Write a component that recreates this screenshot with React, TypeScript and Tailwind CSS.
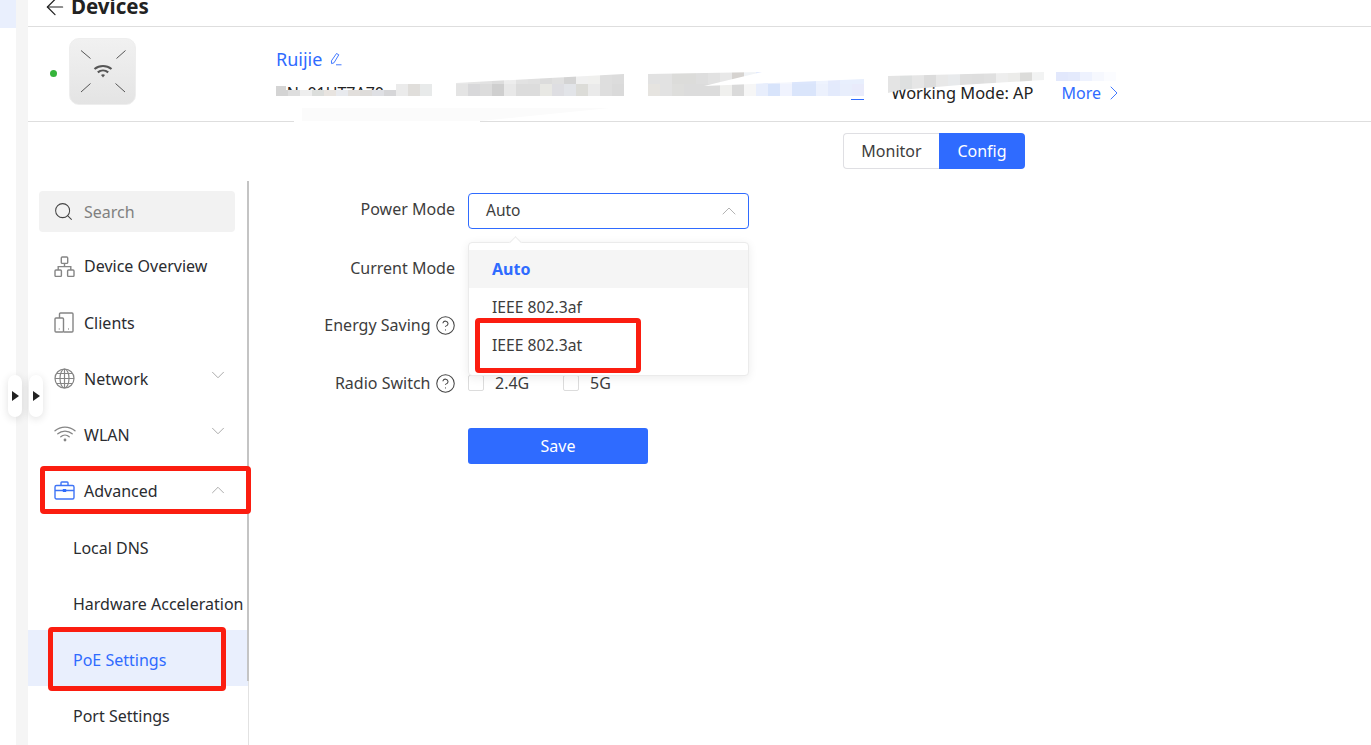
import React from "react";
import { ArrowLeft, ChevronDown, ChevronRight, ChevronUp, CircleHelp, Search } from "lucide-react";

const textFont = "font-['Noto_Sans','Open_Sans',sans-serif]";

function Mosaic({ rows, className }: { rows: string[][]; className: string }) {
  return (
    <div className={`absolute flex flex-col ${className}`}>
      {rows.map((cells, r) => (
        <div key={r} className="flex flex-1">
          {cells.map((c, i) => (
            <div key={i} className="h-full w-[12px] shrink-0" style={{ backgroundColor: c }} />
          ))}
        </div>
      ))}
    </div>
  );
}

function TopologyIcon() {
  return (
    <svg width="21" height="21" viewBox="0 0 21 21" fill="none" stroke="#858585" strokeWidth="1.4">
      <rect x="7.300" y="1" width="6.400" height="6.400" rx="1" />
      <rect x="1" y="14" width="6.400" height="6.400" rx="1" />
      <rect x="13.600" y="14" width="6.400" height="6.400" rx="1" />
      <path d="M10.500 7.400v3.200M4.200 14v-3.400h12.600v3.400" />
    </svg>
  );
}

function ClientsIcon() {
  return (
    <svg width="20" height="21" viewBox="0 0 20 21" fill="none" stroke="#858585" strokeWidth="1.4">
      <path d="M5.500 6V2a1 1 0 0 1 1-1H18a1 1 0 0 1 1 1v17a1 1 0 0 1-1 1H9.500" />
      <rect x="1" y="6" width="8.500" height="14" rx="1" />
      <path d="M4.800 17h.8M14 17h.8" strokeWidth="1.700" />
    </svg>
  );
}

function GlobeIcon() {
  return (
    <svg width="21" height="21" viewBox="0 0 21 21" fill="none" stroke="#858585" strokeWidth="1.200">
      <circle cx="10.500" cy="10.500" r="9.500" />
      <ellipse cx="10.500" cy="10.500" rx="4.500" ry="9.500" />
      <path d="M10.500 1v19M1 10.500h19M2.500 5.500h16M2.500 15.500h16" />
    </svg>
  );
}

function WifiIcon() {
  return (
    <svg width="22" height="18" viewBox="0 0 22 18" fill="none" stroke="#858585" strokeWidth="1.300" strokeLinecap="round">
      <path d="M1 5.800c5.600-5 14.400-5 20 0" />
      <path d="M3.800 8.800c4-3.600 10.400-3.600 14.400 0" />
      <path d="M6.800 11.700c2.400-2.100 6-2.100 8.400 0" />
      <circle cx="11" cy="15" r="1.400" fill="#858585" stroke="none" />
    </svg>
  );
}

function CaseIcon() {
  return (
    <svg width="21" height="19" viewBox="0 0 21 19" fill="none" stroke="#3f74f6" strokeWidth="1.400">
      <rect x="1" y="4.500" width="19" height="13.500" rx="1.500" />
      <path d="M7 4.500V1.800a.8.8 0 0 1 .8-.8h5.400a.8.8 0 0 1 .8.8v2.700M1 9.500h19" />
      <rect x="8.800" y="8" width="3.400" height="3" fill="#2f6bff" stroke="none" />
    </svg>
  );
}

function DeviceGlyph() {
  return (
    <svg width="46" height="46" viewBox="0 0 46 46" fill="none" stroke="#555" strokeWidth="1">
      <path d="M1 1.500l9.500 8M45.500 1.500l-9 8M1 43l9.500-8.500M45 43l-9.500-8.500" />
      <path d="M14.500 20c5-4 12-4 17 0" strokeWidth="2.200" />
      <path d="M17.800 23.300c3-2.400 7.400-2.400 10.400 0" strokeWidth="2.200" />
      <path d="M21 26l2 2.400 2-2.400c-1.200-.9-2.800-.9-4 0z" fill="#555" stroke="none" />
    </svg>
  );
}

function NavRow({ icon, label, chevron, flat }: { icon: React.ReactNode; label: string; chevron?: "up" | "down"; flat?: boolean }) {
  return (
    <div className="flex h-[56px] items-center pl-[26px] pr-[19px]">
      <div className="flex w-[30px] shrink-0 items-center">{icon}</div>
      <span className={`flex-1 text-[16px] text-[#2a2c30] ${flat ? "" : "pt-[2px]"}`}>{label}</span>
      {chevron === "down" && <ChevronDown size={22} strokeWidth={0.9} color="#9a9a9a" className="-translate-y-[3px]" />}
      {chevron === "up" && <ChevronUp size={22} strokeWidth={0.9} color="#9a9a9a" />}
    </div>
  );
}

function SubRow({ label, active }: { label: string; active?: boolean }) {
  return (
    <div className={`flex h-[56px] items-center pl-[45px] pt-[4px] text-[16px] whitespace-nowrap ${active ? "bg-[#e9effd] text-[#2f6bff]" : "text-[#2a2c30]"}`}>
      {label}
    </div>
  );
}

function Handle() {
  return (
    <div className="flex h-[42px] w-[14px] items-center justify-center rounded-[7px] bg-white shadow-[0_2px_8px_rgba(0,0,0,0.12)]">
      <div className="h-0 w-0 border-y-[5px] border-l-[7px] border-y-transparent border-l-[#222]" />
    </div>
  );
}

function FieldLabel({ children, className = "" }: { children: React.ReactNode; className?: string }) {
  return <div className={`flex w-[206px] shrink-0 items-center justify-end text-[16px] text-[#3d3d3d] ${className}`}>{children}</div>;
}

function Help() {
  return <CircleHelp size={21} strokeWidth={1.200} color="#444" className="ml-[4px] -mr-[0.5px]" />;
}

export default function App() {
  return (
    <div className={`relative flex h-[745px] w-[1371px] overflow-hidden bg-white ${textFont}`}>
      <div className="w-[16px] shrink-0">
        <div className="h-[28px] bg-[#e9effd]" />
      </div>
      <div className="w-[12px] shrink-0 bg-[#f5f5f5]" />

      <main className="flex min-w-0 flex-1 flex-col">
        <header className="flex h-[27px] shrink-0 items-end overflow-hidden border-b border-[#dedede] pb-[8px] pl-[14px]">
          <ArrowLeft size={26} strokeWidth={1.150} color="#222" className="-mb-[2px]" />
          <h1 className="ml-[3px] text-[20.500px] leading-[24px] font-bold text-[#222]">Devices</h1>
        </header>

        <section className="relative flex h-[95px] shrink-0 border-b border-[#dedede]">
          <div className="mt-[43px] ml-[22px] h-[7px] w-[7px] rounded-full bg-[#35b43a]" />
          <div className="mt-[11px] ml-[12px] flex h-[67px] w-[67px] items-center justify-center rounded-[10px] border border-[#eeeeee] bg-gradient-to-b from-[#f1f1f1] to-[#e4e4e4]">
            <DeviceGlyph />
          </div>
          <div className="ml-[140px] flex flex-col pt-[19px]">
            <div className="flex items-center gap-[7px]">
              <span className="text-[18px] leading-[26px] text-[#2f6bff]">Ruijie</span>
              <svg width="13" height="14" viewBox="0 0 13 14" fill="none" stroke="#2f6bff" strokeWidth="0.900">
                <path d="M7.500 1.500l2.300 1.300-4.800 8-2.400.8-.2-2.700zM7 12.800h5.500" />
              </svg>
            </div>
            <div className="h-[24px] overflow-hidden pt-[9px] pl-[2px] text-[16px] leading-[24px] text-[#222]">SN: 01UT7A70</div>
          </div>
          <div className="ml-auto flex items-center self-end pb-[16px] pr-[245px]">
            <span className="text-[16.400px] leading-[24px] text-[#222]">Working Mode: AP</span>
            <span className="ml-[28px] text-[16px] leading-[24px] text-[#2f6bff]">More</span>
            <ChevronRight size={24} strokeWidth={0.900} color="#2f6bff" className="ml-[1px]" />
          </div>
        </section>

        <div className="flex shrink-0 pt-[11px] pl-[815px]">
          <div className="flex h-[36px] w-[96px] items-center justify-center rounded-l-[4px] border border-r-0 border-[#dfdfe3] text-[16px] text-[#3d3d3d]">Monitor</div>
          <div className="flex h-[36px] w-[86px] items-center justify-center rounded-r-[4px] bg-[#2f6bff] text-[16px] text-white">Config</div>
        </div>

        <div className="mt-[12px] flex min-h-0 flex-1">
          <aside className="relative h-[564px] w-[221px] shrink-0 border-r border-[#e2e2e2]">
            <div className="absolute top-0 right-[-1px] h-[500px] w-[2px] bg-[#c4c4c4]" />
            <div className="mt-[10px] mb-[6px] ml-[11px] flex h-[41px] w-[196px] items-center gap-[10px] rounded-[4px] bg-[#f2f2f2] pl-[14px]">
              <Search size={21} strokeWidth={1.150} color="#444" />
              <span className="text-[16px] text-[#808080]">Search</span>
            </div>
            <NavRow flat icon={<TopologyIcon />} label="Device Overview" />
            <NavRow icon={<ClientsIcon />} label="Clients" />
            <NavRow icon={<GlobeIcon />} label="Network" chevron="down" />
            <NavRow icon={<WifiIcon />} label="WLAN" chevron="down" />
            <NavRow icon={<CaseIcon />} label="Advanced" chevron="up" />
            <SubRow label="Local DNS" />
            <SubRow label="Hardware Acceleration" />
            <SubRow label="PoE Settings" active />
            <SubRow label="Port Settings" />
          </aside>

          <div className="flex flex-col pt-[12px]">
            <div className="flex h-[36px] items-center">
              <FieldLabel className="-translate-y-[2px]">Power Mode</FieldLabel>
              <div className="relative ml-[13px] flex h-[36px] w-[281px] items-center justify-between rounded-[4px] border border-[#2f6bff] pr-[7px] pl-[17px] text-[15.500px] text-[#3d3d3d]">
                <span className="-translate-y-[0.5px]">Auto</span>
                <ChevronUp size={24} strokeWidth={0.800} color="#a0a0a0" />
                <div className="absolute top-[48px] -left-[1px] z-10 h-[134px] w-[281px] rounded-[4px] border border-[#ebebeb] bg-white pt-[7px] shadow-[0_2px_10px_rgba(0,0,0,0.08)]">
                  <div className="absolute -top-[5px] left-[42px] h-[9px] w-[9px] rotate-45 border-t border-l border-[#ebebeb] bg-white" />
                  <div className="flex h-[38px] items-center bg-[#f5f5f5] pl-[23px] text-[16px] font-bold text-[#2f6bff]">Auto</div>
                  <div className="flex h-[38px] items-center pt-[2px] pl-[23px] text-[15.700px] text-[#3d3d3d]">IEEE 802.3af</div>
                  <div className="flex h-[38px] items-center pt-[2px] pl-[23px] text-[15.700px] text-[#3d3d3d]">IEEE 802.3at</div>
                </div>
              </div>
            </div>
            <div className="mt-[21px] flex h-[36px] items-center"><FieldLabel>Current Mode</FieldLabel></div>
            <div className="mt-[21px] flex h-[36px] items-center">
              <FieldLabel>Energy Saving <Help /></FieldLabel>
            </div>
            <div className="mt-[22px] flex h-[36px] items-center">
              <FieldLabel>Radio Switch <Help /></FieldLabel>
              <div className="ml-[13px] flex items-center text-[16px] text-[#3d3d3d]">
                <div className="h-[16px] w-[16px] rounded-[2px] border border-[#dcdcdc]" />
                <span className="ml-[11px] w-[68px]">2.4G</span>
                <div className="h-[16px] w-[16px] rounded-[2px] border border-[#dcdcdc]" />
                <span className="ml-[11px]">5G</span>
              </div>
            </div>
            <button className="mt-[27px] ml-[219px] h-[36px] w-[180px] rounded-[3px] bg-[#2f6bff] text-[16px] text-white">Save</button>
          </div>
        </div>
      </main>

      <Mosaic
        className="top-[84px] left-[276px] h-[12px] w-[156px] [clip-path:polygon(0_2px,10px_2px,10px_6px,120px_6px,120px_0,156px_0,156px_12px,0_12px)]"
        rows={[["#d4d4d4","#dedede","#eeeeee","#dcdedc","#e8e4e0","#e8eaee","#e2dfdc","#dedcda","#dfe0e4","#d6d6d8","#ebebeb","#e0dedb","#e8eaea"]]}
      />
      <Mosaic
        className="top-[72px] left-[456px] h-[24px] w-[168px] [clip-path:polygon(0_11px,168px_2px,168px_24px,0_24px)]"
        rows={[
          ["#e8e8e8","#e4e4e4","#e2e2e2","#dddddd","#ededed","#e2e2e2","#e0e0e0","#dcdcdc","#e0e0e0","#d4d4d4","#f0f0f0","#f0f0ee","#dedede","#dcdcdc"],
          ["#e4e4e4","#d8d8da","#dcdcdc","#cfcfcf","#e8e8e8","#dcdcdc","#dcdcdc","#e8e8e4","#dedee2","#e2e4e8","#dcdcd8","#eaeaea","#dedede","#dadada"],
        ]}
      />
      <Mosaic
        className="top-[72px] left-[648px] h-[24px] w-[216px] [clip-path:polygon(0_2px,114px_0,56px_14px,216px_7px,216px_24px,0_24px)]"
        rows={[
          ["#e2e2e2","#e2e2e2","#dcdcda","#dcdcda","#dedede","#e2e2e2","#e8e8e8","#d6d3d0","#f0f3f6","#e0e8fc","#e8eefc","#f4f6fd","#dce6fc","#dce6fc","#eef3fe","#e4eafc","#e8effd","#e8effd"],
          ["#e6e4e0","#e2e2e2","#dededc","#dcdcdc","#dcdcdc","#dcdcdc","#f0f0ee","#dadada","#f6f6f6","#e8eefc","#d8e4fb","#f0f3fe","#dae5fb","#dae5fb","#ecf1fd","#e3eafc","#e8eefc","#e9ebfb"],
        ]}
      />
      <Mosaic
        className="top-[72px] left-[888px] h-[21px] w-[156px] [clip-path:polygon(0_4px,156px_0,156px_8px,72px_13px,12px_18px,0_21px)]"
        rows={[["#e4e4e4","#dee0e0","#e6e6e6","#dcdcdc","#e8e8e8","#e8eaec","#dfdfdf","#dedede","#e0e0e0","#eeeeee","#ececea","#dcdcda","#f2f3f3"]]}
      />
      <Mosaic
        className="top-[72px] left-[1056px] h-[9px] w-[72px]"
        rows={[["#e2e8fc","#e4eafc","#eef2fe","#f6f8fe","#fbfcff","#ffffff"]]}
      />
      <div className="absolute top-[99px] left-[851px] h-[1px] w-[13px] bg-[#2f6bff]" />

      <div className="absolute top-[108px] left-[294px] h-[15px] w-[186px] bg-white" />
      <div className="absolute top-[108px] left-[302px] h-[13px] w-[308px] bg-[#fbfbfb] [clip-path:polygon(0_0,100%_0,58%_100%,0_100%)]" />

      <div className="absolute top-[375px] left-[8px] flex gap-[7px]">
        <Handle />
        <Handle />
      </div>

      <div className="pointer-events-none absolute top-[466px] left-[40px] h-[48px] w-[211px] rounded-[4px] border-[5px] border-[#fb1d10]" />
      <div className="pointer-events-none absolute top-[627px] left-[48px] h-[64px] w-[178px] rounded-[4px] border-[5px] border-[#fb1d10]" />
      <div className="pointer-events-none absolute top-[318px] left-[475px] z-20 h-[55px] w-[166px] rounded-[4px] border-[5px] border-[#fb1d10]" />
    </div>
  );
}
